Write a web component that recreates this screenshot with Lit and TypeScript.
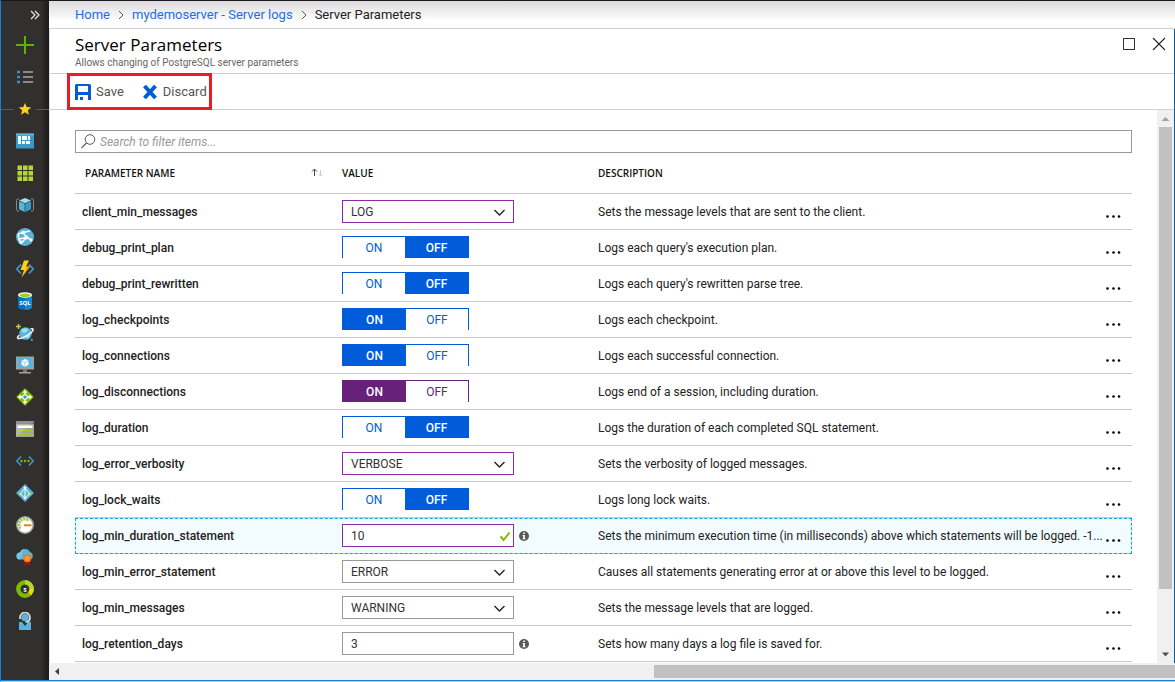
import { LitElement, html, svg, css, nothing } from "lit";
import { customElement, property, state } from "lit/decorators.js";
import { classMap } from "lit/directives/class-map.js";

type Kind = "select" | "toggle" | "text";

interface Param {
  name: string;
  kind: Kind;
  value: string;
  options?: string[];
  dirty?: boolean;
  valid?: boolean;
  selected?: boolean;
  description: string;
}

const LEVELS = ["DEBUG", "LOG", "NOTICE", "WARNING", "ERROR"];

const PARAMS: Param[] = [
  { name: "client_min_messages", kind: "select", value: "LOG", options: LEVELS, dirty: true, description: "Sets the message levels that are sent to the client." },
  { name: "debug_print_plan", kind: "toggle", value: "OFF", description: "Logs each query's execution plan." },
  { name: "debug_print_rewritten", kind: "toggle", value: "OFF", description: "Logs each query's rewritten parse tree." },
  { name: "log_checkpoints", kind: "toggle", value: "ON", description: "Logs each checkpoint." },
  { name: "log_connections", kind: "toggle", value: "ON", description: "Logs each successful connection." },
  { name: "log_disconnections", kind: "toggle", value: "ON", dirty: true, description: "Logs end of a session, including duration." },
  { name: "log_duration", kind: "toggle", value: "OFF", description: "Logs the duration of each completed SQL statement." },
  { name: "log_error_verbosity", kind: "select", value: "VERBOSE", options: ["TERSE", "DEFAULT", "VERBOSE"], dirty: true, description: "Sets the verbosity of logged messages." },
  { name: "log_lock_waits", kind: "toggle", value: "OFF", description: "Logs long lock waits." },
  { name: "log_min_duration_statement", kind: "text", value: "10", dirty: true, valid: true, selected: true, description: "Sets the minimum execution time (in milliseconds) above which statements will be logged. -1..." },
  { name: "log_min_error_statement", kind: "select", value: "ERROR", options: LEVELS, description: "Causes all statements generating error at or above this level to be logged." },
  { name: "log_min_messages", kind: "select", value: "WARNING", options: LEVELS, description: "Sets the message levels that are logged." },
  { name: "log_retention_days", kind: "text", value: "3", description: "Sets how many days a log file is saved for." },
];

const NAV = [
  { label: "New", icon: svg`<path d="M9 0v18M0 9h18" stroke="#5db300" stroke-width="2"/>` },
  {
    label: "All services",
    icon: svg`<path d="M7 4h10M7 9h10M7 14h10" stroke="#8a8a8a" stroke-width="2"/>
      <path d="M1 4h3M1 9h3M1 14h3" stroke="#3f8fb8" stroke-width="2.4"/>`,
  },
  { label: "Favorites", divider: true, icon: svg`<path d="M9 3l1.700 4.100 4.500.3-3.400 2.900 1.100 4.400L9 12.300l-3.900 2.400 1.100-4.400-3.400-2.900 4.500-.3z" fill="#ffd31a"/>` },
  {
    label: "Dashboard",
    icon: svg`<rect y="1.500" width="18" height="15" fill="#3999c6"/><rect y="1.500" width="18" height="2" fill="#59b4d9"/>
      <path d="M2 4h3v8H2zM6 4h5v4H6zM12 4h2v4h-2zM6 9h3v3H6zM10 9h4v3h-4z" fill="#fff"/>`,
  },
  {
    label: "All resources",
    icon: svg`<path d="M1.500 1.500h4.500v4.500h-4.500zM7 1.500h4.500v4.500H7zM12.500 1.500h4.500v4.500h-4.500zM1.500 7h4.500v4.500h-4.500zM7 7h4.500v4.500H7zM12.500 7h4.500v4.500h-4.500zM1.500 12.500h4.500v4.500h-4.500zM7 12.500h4.500v4.500H7zM12.500 12.500h4.500v4.500h-4.500z" fill="#b8d432"/>`,
  },
  {
    label: "Resource groups",
    icon: svg`<path d="M3 3H1.500Q.5 3 .5 4.500v9Q.5 15 1.500 15H3M15 3h1.500q1 0 1 1.500v9q0 1.500-1 1.500H15" fill="none" stroke="#8a8a8a"/>
      <path d="M9 2l6 2.600L9 7.200 3 4.600z" fill="#a5dcf0"/><path d="M3 5.200l5.700 2.500V16L3 13.200z" fill="#59b4d9"/><path d="M15 5.200L9.300 7.700V16l5.700-2.800z" fill="#3999c6"/>`,
  },
  {
    label: "App Services",
    icon: svg`<circle cx="9" cy="9" r="9" fill="#59b4d9"/>
      <path d="M2 6l5-1.500L14 3M7 4.500l3.500 5L16 12M10.500 9.500L5 15.500M3 11l7.500-1.500M2 6l1 5 2 4.500" fill="none" stroke="#fff" stroke-width="1.500"/>
      <circle cx="7" cy="4.500" r="1.700" fill="#fff"/><circle cx="10.500" cy="9.500" r="2" fill="#fff"/><circle cx="5" cy="14" r="1.600" fill="#fff"/><circle cx="15" cy="12" r="1.500" fill="#fff"/>`,
  },
  {
    label: "Function Apps",
    icon: svg`<path d="M5 4.500L.8 9 5 13.500M13 4.500L17.200 9 13 13.500" fill="none" stroke="#3999c6" stroke-width="1.700"/>
      <path d="M8 .5h5L10 6.500h4L5.500 17.500 8 10H4.500z" fill="#fcd116"/><path d="M11 6.500h3L5.500 17.500 10.500 9z" fill="#ff8c00"/>`,
  },
  {
    label: "SQL databases",
    icon: svg`<path d="M2 3v12c0 3.700 14 3.700 14 0V3z" fill="#0072c6"/><path d="M9 3h7v12c0 2-3.500 2.800-7 2.800z" fill="#1a83cf"/>
      <ellipse cx="9" cy="3" rx="7" ry="2.700" fill="#fff"/><ellipse cx="9" cy="3.200" rx="5.300" ry="1.800" fill="#9bd01c"/>
      <text x="9" y="13" text-anchor="middle" font-size="6" font-weight="700" fill="#fff" font-family="Open Sans, sans-serif">SQL</text>`,
  },
  {
    label: "Azure Cosmos DB",
    icon: svg`<circle cx="9.500" cy="9.500" r="6.300" fill="#59b4d9"/><path d="M5 6q3-3 7-1l-1 3-4 1zM9 12l5-1-2 4z" fill="#9bdcf3"/>
      <path d="M14.500 5c3.400-.8 3.600.9.5 3.600-3 2.600-8.300 5.400-11.300 5.900-2.800.4-2.900-1-.4-3.300" fill="none" stroke="#f0f0f0" stroke-width="1.600"/>
      <path d="M2.500 0v5M0 2.500h5" stroke="#b8d432" stroke-width="1.400"/><circle cx="15.800" cy="15.800" r="1.200" fill="#3999c6"/>`,
  },
  {
    label: "Virtual machines",
    icon: svg`<rect y=".5" width="18" height="13" fill="#a0a1a2"/><rect x="1.500" y="2" width="15" height="10" fill="#59b4d9"/>
      <path d="M9 3l3.500 1.800v4L9 11 5.500 8.800v-4z" fill="#fff"/><path d="M5.500 4.800L9 6.500l3.500-1.700M9 6.500V11" fill="none" stroke="#59b4d9" stroke-width=".6"/>
      <path d="M7 13.500h4V16H7z" fill="#7a7a7a"/><path d="M3 16h12v1.500H3z" fill="#a0a1a2"/>`,
  },
  {
    label: "Load balancers",
    icon: svg`<rect x="2.700" y="2.700" width="12.600" height="12.600" rx="1" transform="rotate(45 9 9)" fill="#7fba00"/>
      <path d="M9 3v12M3 9h12" fill="none" stroke="#fff" stroke-width="1.300"/>
      <path d="M9 1.800l2.400 2.900H6.600zM9 16.200l2.400-2.900H6.600zM1.800 9l2.900-2.400v4.800zM16.200 9l-2.900-2.400v4.800z" fill="#fff"/>
      <circle cx="9" cy="9" r="2.800" fill="#fff"/><circle cx="9" cy="9" r="1.800" fill="#3999c6"/>`,
  },
  {
    label: "Storage accounts",
    icon: svg`<rect y="1" width="18" height="16" fill="#a0a1a2"/><rect y="1" width="18" height="3" fill="#7a7a7a"/>
      <path d="M1.500 5.500h15v2.500h-15z" fill="#fff"/><path d="M1.500 9h15v2.500h-15zM1.500 13h15v2.500h-15z" fill="#a5c81c"/><path d="M0 1h18L0 17z" fill="#fff" opacity=".18"/>`,
  },
  {
    label: "Virtual networks",
    icon: svg`<path d="M5 4.500L.8 9 5 13.500M13 4.500L17.200 9 13 13.500" fill="none" stroke="#3999c6" stroke-width="1.600"/>
      <circle cx="5.500" cy="9" r="1.200" fill="#7fba00"/><circle cx="9" cy="9" r="1.200" fill="#7fba00"/><circle cx="12.500" cy="9" r="1.200" fill="#7fba00"/>`,
  },
  {
    label: "Azure Active Directory",
    icon: svg`<rect x="2.700" y="2.700" width="12.600" height="12.600" transform="rotate(45 9 9)" fill="#59b4d9"/>
      <path d="M9 4v10M9 4l-4.500 6L9 14l4.500-4z" fill="none" stroke="#fff"/><circle cx="9" cy="4" r="1.400" fill="#fff"/><circle cx="4.500" cy="10" r="1.300" fill="#d9e86a"/><circle cx="13.500" cy="10" r="1.300" fill="#d9e86a"/><circle cx="9" cy="14" r="1.300" fill="#fff"/>`,
  },
  {
    label: "Monitor",
    icon: svg`<circle cx="9" cy="9" r="8.200" fill="#fff" stroke="#a0a1a2" stroke-width="1.600"/>
      <path d="M4.500 12.500A5.500 5.500 0 0 1 13 5" fill="none" stroke="#9bc83c" stroke-width="2.600" stroke-dasharray="2 .8"/><path d="M8 8.300h7.500v2H8z" fill="#f07d1a"/>`,
  },
  {
    label: "Advisor",
    icon: svg`<path d="M4 11.500a3.500 3.500 0 0 1 0-7 5.500 5.500 0 0 1 10-.5 4 4 0 0 1 .5 7.500z" fill="#59b4d9"/><path d="M4 11.500a3.500 3.500 0 0 1 0-7 5.500 5.500 0 0 1 4-3.500z" fill="#7cc6e3"/>
      <path d="M8.500 12h5.500v6l-2.700-1.800L8.500 18z" fill="#a80f22"/><circle cx="11.300" cy="10.300" r="4" fill="#f07d1a"/><circle cx="11.300" cy="10.300" r="2.300" fill="#ff9b3d"/>`,
  },
  {
    label: "Cost Management + Billing",
    icon: svg`<circle cx="9" cy="9" r="6.700" fill="#303030" stroke="#7fba00" stroke-width="4.400"/><path d="M9 2.300A6.700 6.700 0 0 1 15.700 9" fill="none" stroke="#b8d432" stroke-width="4.400"/><path d="M15.700 9a6.700 6.700 0 0 1-2 4.700" fill="none" stroke="#fcd116" stroke-width="4.400"/>
      <text x="9" y="11.500" text-anchor="middle" font-size="7" font-weight="700" fill="#fff" font-family="Open Sans, sans-serif">s</text>`,
  },
  {
    label: "Help + support",
    icon: svg`<path d="M3 10h12v8H3z" fill="#59b4d9"/><path d="M6 10l3 4 3-4z" fill="#303030"/><circle cx="9" cy="5.500" r="3.800" fill="#59b4d9"/>
      <path d="M4 7V5.500a5 5 0 0 1 10 0c0 3-1.500 4.500-4.500 4.500" fill="none" stroke="#e6e6e6" stroke-width="1.600"/>`,
  },
];

/** Narrow favourites bar at the left edge of the portal. */
@customElement("portal-nav")
export class PortalNav extends LitElement {
  static styles = css`
    :host {
      display: block;
      background: linear-gradient(to right, #32302e 0, #32302e 82%, #1c1b1a 100%);
    }
    nav {
      display: flex;
      flex-direction: column;
    }
    button {
      display: flex;
      align-items: center;
      justify-content: center;
      height: 32px;
      padding: 0;
      border: 0;
      background: none;
      cursor: pointer;
    }
    .expand {
      height: 28px;
      padding-left: 20px;
    }
    .divided {
      gap: 2px;
    }
    .divided::before,
    .divided::after {
      content: "";
      flex: 1;
      height: 1px;
      background: #5c5a58;
    }
    .icon {
      display: block;
      width: 18px;
      height: 18px;
    }
    .chev {
      display: block;
      width: 10px;
      height: 10px;
    }
  `;

  render() {
    return html`<nav aria-label="Favorites">
      <button class="expand" aria-label="Expand menu">
        <svg class="chev" viewBox="0 0 10 10"><path d="M1 1l4 4-4 4M5 1l4 4-4 4" fill="none" stroke="#e8e8e8" stroke-width="1.200" /></svg>
      </button>
      ${NAV.map(
        (n) => html`<button class=${classMap({ divided: !!n.divider })} aria-label=${n.label}>
          <svg class="icon" viewBox="0 0 18 18">${n.icon}</svg>
        </button>`
      )}
    </nav>`;
  }
}

/** Editor for the value of one parameter: a drop-down, an ON/OFF switch or a text box. */
@customElement("param-value")
export class ParamValue extends LitElement {
  @property({ attribute: false }) param!: Param;
  @state() private current = "";

  static styles = css`
    :host {
      display: flex;
      align-items: center;
      gap: 5px;
      --edge: #999;
      --fill: #015cda;
    }
    :host([dirty]) {
      --edge: #8a2da5;
      --fill: #68217a;
    }
    .field {
      display: grid;
      align-items: center;
      width: 172px;
    }
    .field > * {
      grid-area: 1 / 1;
    }
    select,
    input {
      box-sizing: border-box;
      width: 100%;
      height: 23px;
      margin: 0;
      padding: 0 8px;
      border: 1px solid var(--edge);
      border-radius: 0;
      appearance: none;
      background: #fff;
      color: #333;
      font: 12px/20px Roboto, sans-serif;
      outline: none;
    }
    .mark {
      justify-self: end;
      width: 12px;
      height: 12px;
      margin-right: 8px;
      pointer-events: none;
    }
    .tick {
      margin-right: 3px;
    }
    .info {
      display: block;
      width: 10px;
      height: 10px;
    }
    .toggle {
      display: flex;
      width: 127px;
      height: 22px;
      margin-bottom: 1px;
    }
    .toggle button {
      box-sizing: border-box;
      width: 63px;
      padding: 0;
      border: 0 solid var(--fill);
      border-top-width: 1px;
      background: #fff;
      color: var(--fill);
      font: 12px/20px Roboto, sans-serif;
      cursor: pointer;
    }
    .toggle button:first-child {
      border-left-width: 1px;
    }
    .toggle button:last-child {
      border-right-width: 1px;
    }
    .toggle .on {
      width: 64px;
      background: var(--fill);
      color: #fff;
      font-weight: 500;
    }
  `;

  willUpdate(changed: Map<string, unknown>) {
    if (changed.has("param")) this.current = this.param.value;
  }

  render() {
    const p = this.param;
    if (p.kind === "toggle") {
      return html`<div class="toggle" role="group" aria-label=${p.name}>
        ${["ON", "OFF"].map(
          (v) => html`<button
            class=${classMap({ on: this.current === v })}
            aria-pressed=${this.current === v}
            @click=${() => (this.current = v)}
          >${v}</button>`
        )}
      </div>`;
    }
    if (p.kind === "select") {
      return html`<div class="field">
        <select aria-label=${p.name}>
          ${p.options!.map((o) => html`<option ?selected=${o === p.value}>${o}</option>`)}
        </select>
        <svg class="mark" viewBox="0 0 12 12"><path d="M.5 4l5 5 5-5" fill="none" stroke="#222" stroke-width="1.400" /></svg>
      </div>`;
    }
    return html`<div class="field">
        <input type="text" aria-label=${p.name} .value=${p.value} />
        ${p.valid
          ? html`<svg class="mark tick" viewBox="0 0 12 12"><path d="M1.500 6.500l3 3.500 6-7.500" fill="none" stroke="#7fba00" stroke-width="2" /></svg>`
          : nothing}
      </div>
      <svg class="info" viewBox="0 0 10 10" role="img" aria-label="More information">
        <circle cx="5" cy="5" r="5" fill="#595959" />
        <path d="M4.200 1.600h1.700v1.500H4.200zM3.600 4h2.300v3.300h.6v1H3.600v-1h.6V5h-.6z" fill="#fff" />
      </svg>`;
  }
}

@customElement("app-root")
export class AppRoot extends LitElement {
  static styles = css`
    :host {
      display: grid;
      grid-template-columns: 48px minmax(0, 1fr);
      box-sizing: border-box;
      height: 100vh;
      border-top: 1px solid #1c191c;
      border-left: 1px solid #1681d8;
      border-bottom: 1px solid #c9cdd2;
      box-shadow: inset 0 -1px #1681d8;
      background: #fff;
      color: #222;
      font: 12px/18px Roboto, sans-serif;
      overflow: hidden;
    }
    portal-nav,
    main {
      margin-bottom: 1px;
    }
    main {
      display: flex;
      flex-direction: column;
      min-width: 0;
      min-height: 0;
    }
    .blade {
      display: flex;
      flex: 1;
      flex-direction: column;
      min-height: 0;
      border-left: 1px solid #ddd;
      border-right: 1px solid #1a5a86;
    }
    .crumbs {
      display: flex;
      align-items: center;
      gap: 8px;
      height: 27px;
      padding-left: 26px;
      border-bottom: 1px solid #d2d2d2;
      background: linear-gradient(#dcdadc, #fff 20px);
      font-size: 13px;
      line-height: 20px;
      color: #222;
    }
    .crumbs a {
      color: #1f6fe0;
      text-decoration: none;
    }
    .crumb-sep {
      width: 6px;
      height: 8px;
    }
    header {
      display: flex;
      align-items: flex-start;
      justify-content: space-between;
      height: 44px;
      padding: 0 8px 0 25px;
      border-bottom: 1px solid #d2d2d2;
    }
    h1 {
      margin: 4px 0 0;
      color: #000;
      font: 400 17px/24px "Open Sans", sans-serif;
    }
    .sub {
      margin: 0;
      color: #666;
      font-size: 10px;
      line-height: 12px;
    }
    .window {
      display: flex;
      gap: 16px;
      padding-top: 8px;
    }
    .window button,
    .more {
      display: block;
      padding: 0;
      border: 0;
      background: none;
      cursor: pointer;
    }
    .window svg {
      display: block;
      width: 14px;
      height: 14px;
    }
    .toolbar {
      display: flex;
      padding: 2px 20px;
      border-bottom: 1px solid #d2d2d2;
    }
    .commands {
      display: flex;
      gap: 18px;
      height: 31px;
      padding: 0 2px 0 5px;
      outline: 3px solid #ed1c24;
    }
    .commands button {
      display: flex;
      align-items: center;
      gap: 5px;
      padding: 0;
      border: 0;
      background: none;
      color: #555;
      font: 13px/18px Roboto, sans-serif;
      cursor: pointer;
    }
    .commands svg {
      width: 16px;
      height: 16px;
    }
    .scroller {
      display: flex;
      flex: 1;
      min-height: 0;
    }
    .content {
      flex: 1;
      min-width: 0;
      padding: 20px 25px 0;
      overflow: hidden;
    }
    .search {
      display: flex;
      align-items: center;
      gap: 4px;
      height: 21px;
      padding: 0 5px;
      border: 1px solid #999;
    }
    .search svg {
      width: 15px;
      height: 15px;
    }
    .search input {
      flex: 1;
      min-width: 0;
      padding: 0;
      border: 0;
      outline: 0;
      background: none;
      font: 12px/18px Roboto, sans-serif;
    }
    .search input::placeholder {
      color: #999;
      font-style: italic;
    }
    table {
      width: 100%;
      border-collapse: separate;
      border-spacing: 0;
      table-layout: fixed;
    }
    th,
    td {
      box-sizing: border-box;
      height: 36px;
      padding: 0;
      border-bottom: 1px solid #c8c8c8;
      text-align: left;
      vertical-align: middle;
    }
    thead th {
      height: 41px;
      color: #111;
      font: 600 10px/18px "Open Sans", sans-serif;
    }
    .head {
      display: flex;
      align-items: center;
      justify-content: space-between;
      padding: 0 19px 0 10px;
    }
    .head svg {
      width: 12px;
      height: 10px;
    }
    tbody th {
      padding-left: 7px;
      font-weight: 500;
    }
    .c-name {
      width: 267px;
    }
    .c-value {
      width: 256px;
    }
    .c-more {
      width: 28px;
    }
    .desc {
      overflow: hidden;
      text-overflow: ellipsis;
      white-space: nowrap;
    }
    .more {
      padding: 11px 2px 1px;
    }
    .more svg {
      display: block;
      width: 15px;
      height: 3px;
    }
    .picked {
      background: #f2fbfe;
      outline: 1px dashed #00abec;
      outline-offset: -1px;
    }
    .vbar {
      display: flex;
      flex-direction: column;
      align-items: center;
      width: 17px;
      background: #f0f0f0;
    }
    .vbar svg,
    .hbar svg {
      flex: none;
      width: 17px;
      height: 17px;
    }
    .vtrack {
      flex: 1;
      width: 13px;
    }
    .vthumb {
      height: 89%;
      background: #c1c1c1;
    }
    .hbar {
      display: flex;
      align-items: center;
      height: 17px;
      background: #f0f0f0;
    }
    .htrack {
      display: flex;
      flex: 1;
      justify-content: flex-end;
    }
    .hthumb {
      width: 47%;
      height: 13px;
      background: #c1c1c1;
    }
  `;

  render() {
    const sep = html`<svg class="crumb-sep" viewBox="0 0 6 8"><path d="M1 0l4 4-4 4" fill="none" stroke="#555" /></svg>`;
    return html`
      <portal-nav></portal-nav>
      <main>
        <nav class="crumbs" aria-label="Breadcrumb">
          <a href="#home">Home</a>${sep}<a href="#logs">mydemoserver - Server logs</a>${sep}<span>Server Parameters</span>
        </nav>
        <div class="blade">
          <header>
            <div>
              <h1>Server Parameters</h1>
              <p class="sub">Allows changing of PostgreSQL server parameters</p>
            </div>
            <div class="window">
              <button aria-label="Maximize">
                <svg viewBox="0 0 14 14"><rect x="1.500" y="1.500" width="11" height="11" fill="none" stroke="#333" /></svg>
              </button>
              <button aria-label="Close">
                <svg viewBox="0 0 14 14"><path d="M1 1l12 12M13 1L1 13" stroke="#222" stroke-width="1.100" /></svg>
              </button>
            </div>
          </header>
          <div class="toolbar">
            <div class="commands">
              <button>
                <svg viewBox="0 0 16 16"><path fill="#015cda" fill-rule="evenodd" d="M1 0h14l1 1v15h-3v-5H3v5H0V1zM3 2v6h10V2zM5 13h3v3H5z" /></svg>
                Save
              </button>
              <button>
                <svg viewBox="0 0 16 16"><path d="M2.500 2l11 12M13.500 2l-11 12" stroke="#015cda" stroke-width="4" /></svg>
                Discard
              </button>
            </div>
          </div>
          <div class="scroller">
            <div class="content">
              <div class="search">
                <svg viewBox="0 0 15 15"><circle cx="9" cy="5.500" r="4.800" fill="none" stroke="#555" /><path d="M5.500 9L.5 14" stroke="#555" stroke-width="1.200" /></svg>
                <input type="text" aria-label="Search to filter items" placeholder="Search to filter items..." />
              </div>
              <table>
                <colgroup>
                  <col class="c-name" />
                  <col class="c-value" />
                  <col />
                  <col class="c-more" />
                </colgroup>
                <thead>
                  <tr>
                    <th scope="col">
                      <div class="head">
                        PARAMETER NAME
                        <svg viewBox="0 0 12 10"><path d="M3.500 8V1M1 3.500L3.500 1 6 3.500" fill="none" stroke="#444" /><path d="M9.500 2v6M7.500 6l2 2 2-2" fill="none" stroke="#ccc" /></svg>
                      </div>
                    </th>
                    <th scope="col">VALUE</th>
                    <th scope="col">DESCRIPTION</th>
                    <th></th>
                  </tr>
                </thead>
                <tbody>
                  ${PARAMS.map(
                    (p) => html`<tr class=${classMap({ picked: !!p.selected })}>
                      <th scope="row">${p.name}</th>
                      <td><param-value .param=${p} ?dirty=${!!p.dirty}></param-value></td>
                      <td class="desc">${p.description}</td>
                      <td>
                        <button class="more" aria-label="More options for ${p.name}">
                          <svg viewBox="0 0 15 3"><circle cx="1.500" cy="1.500" r="1.300" /><circle cx="7.500" cy="1.500" r="1.300" /><circle cx="13" cy="1.500" r="1.300" /></svg>
                        </button>
                      </td>
                    </tr>`
                  )}
                </tbody>
              </table>
            </div>
            <div class="vbar">
              <svg viewBox="0 0 17 17"><path d="M4.500 11L8.500 7l4 4z" fill="#a3a3a3" /></svg>
              <div class="vtrack"><div class="vthumb"></div></div>
              <svg viewBox="0 0 17 17"><path d="M5 6.500h7l-3.500 4z" fill="#505050" /></svg>
            </div>
          </div>
        </div>
        <div class="hbar">
          <svg viewBox="0 0 17 17"><path d="M10 5v7L6 8.500z" fill="#404040" /></svg>
          <div class="htrack"><div class="hthumb"></div></div>
        </div>
      </main>
    `;
  }
}
